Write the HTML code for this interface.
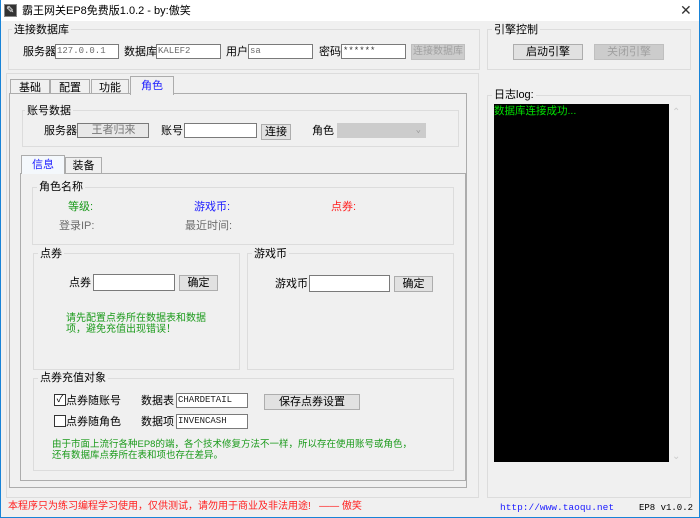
<!DOCTYPE html>
<html><head><meta charset="utf-8"><style>
*{box-sizing:border-box;margin:0;padding:0}
body{width:700px;height:518px;overflow:hidden;background:#f0f0f0;font-family:"Liberation Sans","Noto Sans CJK SC",sans-serif;font-size:11px;color:#000;position:relative}
.a{position:absolute;white-space:nowrap;line-height:14px}
.g{position:absolute;border:1px solid #dcdcdc}
.gl{position:absolute;background:#f0f0f0;padding:0 2px;line-height:14px}
.in{position:absolute;background:#fff;border:1px solid #7a7a7a;height:15px;font-family:"Liberation Mono","Noto Sans CJK SC",monospace;font-size:9px;line-height:13px;padding-left:1px;color:#6d6d6d;white-space:nowrap;overflow:hidden}
.bt{position:absolute;background:#e1e1e1;border:1px solid #adadad;height:16px;text-align:center;line-height:14px;white-space:nowrap;overflow:hidden}
.dis{background:#cccccc;border-color:#bfbfbf;color:#a0a0a0}
.tab{position:absolute;border:1px solid #acacac;border-bottom:none;background:#f0f0f0;text-align:center;line-height:16px}
</style></head><body>
<div style="position:absolute;left:0;top:0;width:700px;height:518px;border:1px solid #1883d7;border-top:none"></div>
<div style="position:absolute;left:1px;top:0;width:698px;height:21px;background:#fff"></div>
<div style="position:absolute;left:4px;top:4px;width:13px;height:13px;background:#333;border:1px solid #888"></div>
<div class="a" style="left:6px;top:4px;color:#fff;font-size:10px">✎</div>
<div class="a" style="left:22px;top:4px;font-size:11px">霸王网关EP8免费版1.0.2 - by:傲笑</div>
<div class="a" style="left:680px;top:3px;font-size:14px;color:#333">✕</div>

<div class="g" style="left:8px;top:29px;width:472px;height:41px"></div>
<div class="gl" style="left:12px;top:23px">连接数据库</div>
<div class="a" style="left:23px;top:45px">服务器</div>
<div class="in" style="left:55px;top:44px;width:64px">127.0.0.1</div>
<div class="a" style="left:124px;top:45px">数据库</div>
<div class="in" style="left:156px;top:44px;width:65px">KALEF2</div>
<div class="a" style="left:226px;top:45px">用户</div>
<div class="in" style="left:248px;top:44px;width:65px">sa</div>
<div class="a" style="left:319px;top:45px">密码</div>
<div class="in" style="left:341px;top:44px;width:65px;color:#333">******</div>
<div class="bt dis" style="left:411px;top:44px;width:54px;font-size:10px">连接数据库</div>

<div class="g" style="left:6px;top:73px;width:473px;height:425px"></div>

<div class="tab" style="left:10px;top:79px;width:40px;height:15px">基础</div>
<div class="tab" style="left:50px;top:79px;width:40px;height:15px">配置</div>
<div class="tab" style="left:91px;top:79px;width:38px;height:15px">功能</div>
<div style="position:absolute;left:9px;top:93px;width:458px;height:395px;border:1px solid #acacac"></div>
<div class="tab" style="left:130px;top:76px;width:44px;height:19px;color:#1c1cff;line-height:18px">角色</div>

<div class="g" style="left:22px;top:110px;width:437px;height:37px"></div>
<div class="gl" style="left:25px;top:104px">账号数据</div>
<div class="a" style="left:44px;top:124px">服务器</div>
<div class="in" style="left:77px;top:123px;width:72px;background:#e8e8e8;color:#777;text-align:center;font-family:'Liberation Sans','Noto Sans CJK SC',sans-serif;font-size:11px">王者归来</div>
<div class="a" style="left:161px;top:124px">账号</div>
<div class="in" style="left:184px;top:123px;width:73px"></div>
<div class="bt" style="left:261px;top:124px;width:30px">连接</div>
<div class="a" style="left:312px;top:124px">角色</div>
<div class="in" style="left:337px;top:123px;width:89px;background:#ccc;border-color:#ccc;text-align:right;padding-right:4px;color:#999">⌄</div>

<div class="tab" style="left:65px;top:157px;width:37px;height:16px">装备</div>
<div style="position:absolute;left:20px;top:173px;width:446px;height:308px;border:1px solid #acacac"></div>
<div class="tab" style="left:21px;top:155px;width:44px;height:19px;color:#1c1cff;background:#f4f8fc;line-height:18px">信息</div>

<div class="g" style="left:32px;top:187px;width:422px;height:58px"></div>
<div class="gl" style="left:37px;top:180px">角色名称</div>
<div class="a" style="left:68px;top:200px;color:#1a9a1a">等级:</div>
<div class="a" style="left:194px;top:200px;color:#1c1cff">游戏币:</div>
<div class="a" style="left:331px;top:200px;color:#ff2020">点券:</div>
<div class="a" style="left:59px;top:219px;color:#6d6d6d">登录IP:</div>
<div class="a" style="left:185px;top:219px;color:#6d6d6d">最近时间:</div>

<div class="g" style="left:33px;top:253px;width:207px;height:117px"></div>
<div class="gl" style="left:38px;top:247px">点券</div>
<div class="a" style="left:69px;top:276px">点券</div>
<div class="in" style="left:93px;top:274px;width:82px;height:17px"></div>
<div class="bt" style="left:179px;top:275px;width:39px">确定</div>
<div class="a" style="left:66px;top:313px;color:#1a9a1a;line-height:11px;font-size:10px">请先配置点券所在数据表和数据<br>项，避免充值出现错误！</div>

<div class="g" style="left:247px;top:253px;width:207px;height:117px"></div>
<div class="gl" style="left:252px;top:247px">游戏币</div>
<div class="a" style="left:275px;top:277px">游戏币</div>
<div class="in" style="left:309px;top:275px;width:81px;height:17px"></div>
<div class="bt" style="left:394px;top:276px;width:39px">确定</div>

<div class="g" style="left:33px;top:378px;width:421px;height:93px"></div>
<div class="gl" style="left:38px;top:371px">点券充值对象</div>
<div style="position:absolute;left:54px;top:394px;width:12px;height:12px;border:1px solid #333;background:#fff;font-size:10px;line-height:10px;text-align:center">✓</div>
<div class="a" style="left:66px;top:394px">点券随账号</div>
<div class="a" style="left:141px;top:394px">数据表</div>
<div class="in" style="left:176px;top:393px;width:72px;color:#222">CHARDETAIL</div>
<div class="bt" style="left:264px;top:394px;width:96px">保存点券设置</div>
<div style="position:absolute;left:54px;top:415px;width:12px;height:12px;border:1px solid #333;background:#fff"></div>
<div class="a" style="left:66px;top:415px">点券随角色</div>
<div class="a" style="left:141px;top:415px">数据项</div>
<div class="in" style="left:176px;top:414px;width:72px;color:#222">INVENCASH</div>
<div class="a" style="left:52px;top:439px;color:#1a9a1a;line-height:11px;font-size:9.5px">由于市面上流行各种EP8的端，各个技术修复方法不一样，所以存在使用账号或角色，<br>还有数据库点券所在表和项也存在差异。</div>

<div class="g" style="left:487px;top:29px;width:204px;height:41px"></div>
<div class="gl" style="left:492px;top:23px">引擎控制</div>
<div class="bt" style="left:513px;top:44px;width:70px">启动引擎</div>
<div class="bt dis" style="left:594px;top:44px;width:70px">关闭引擎</div>

<div class="g" style="left:487px;top:95px;width:204px;height:403px"></div>
<div class="gl" style="left:492px;top:88px">日志log:</div>
<div style="position:absolute;left:494px;top:104px;width:175px;height:358px;background:#000"></div>
<div class="a" style="left:494px;top:104px;color:#00e000;font-size:10.5px">数据库连接成功...</div>
<div class="a" style="left:672px;top:106px;color:#ccc;font-size:10px">⌃</div>
<div class="a" style="left:672px;top:450px;color:#ccc;font-size:10px">⌄</div>

<div class="a" style="left:8px;top:500px;color:#ff2020;font-size:10px">本程序只为练习编程学习使用，仅供测试，请勿用于商业及非法用途!&nbsp;&nbsp;&nbsp;—— 傲笑</div>
<div class="a" style="left:500px;top:501px;color:#1c1cff;font-family:'Liberation Mono',monospace;font-size:9.5px">http://www.taoqu.net</div>
<div class="a" style="left:639px;top:501px;font-family:'Liberation Mono',monospace;font-size:9px">EP8 v1.0.2</div>
</body></html>
